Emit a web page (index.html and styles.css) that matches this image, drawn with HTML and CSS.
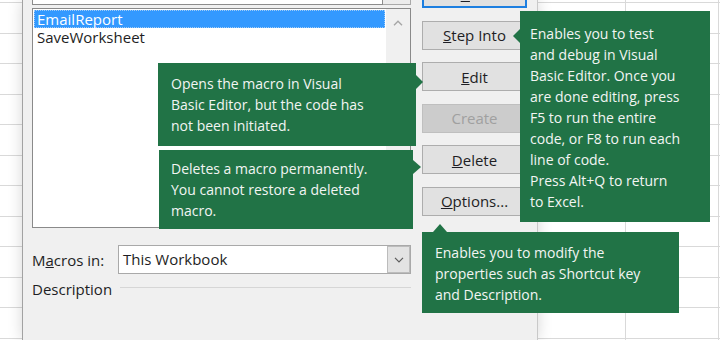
FILE: index.html
```html
<!DOCTYPE html>
<html lang="en">
<head>
<meta charset="utf-8">
<title>Macro dialog</title>
<link rel="stylesheet" href="styles.css">
</head>
<body>
<div class="screen">
  <div class="sheet sheet-left"></div>
  <div class="dialog">
    <div class="main">
      <div class="name-row">
        <div class="name-input"></div>
        <div class="name-btn"></div>
      </div>
      <div class="listbox">
        <ul class="items">
          <li class="item selected">EmailReport</li>
          <li class="item">SaveWorksheet</li>
        </ul>
        <div class="scrollbar">
          <div class="arrow-box">
            <svg width="10" height="6" viewBox="0 0 10 6"><path d="M1 5.2 L5 1.2 L9 5.2" fill="none" stroke="#a6a6a6" stroke-width="1.4"/></svg>
          </div>
        </div>
      </div>
      <div class="macros-row">
        <span class="label label-macros">M<u>a</u>cros in:</span>
        <div class="combo">
          <span class="combo-value">This Workbook</span>
          <span class="combo-btn">
            <svg width="10" height="6" viewBox="0 0 10 6"><path d="M1 0.8 L5 4.8 L9 0.8" fill="none" stroke="#5c5c5c" stroke-width="1.2"/></svg>
          </span>
        </div>
      </div>
      <div class="desc-row">
        <span class="label">Description</span>
        <span class="rule"></span>
      </div>
    </div>
    <div class="buttons">
      <button class="btn default"><u>R</u>un</button>
      <button class="btn"><u>S</u>tep Into</button>
      <button class="btn"><u>E</u>dit</button>
      <button class="btn disabled">Create</button>
      <button class="btn"><u>D</u>elete</button>
      <button class="btn"><u>O</u>ptions...</button>
    </div>
  </div>
  <div class="sheet sheet-right"></div>

  <div class="callout callout-step">Enables you to test<br>and debug in Visual<br>Basic Editor. Once you<br>are done editing, press<br>F5 to run the entire<br>code, or F8 to run each<br>line of code.<br>Press Alt+Q to return<br>to Excel.</div>
  <div class="callout callout-edit">Opens the macro in Visual<br>Basic Editor, but the code has<br>not been initiated.</div>
  <div class="callout callout-delete">Deletes a macro permanently.<br>You cannot restore a deleted<br>macro.</div>
  <div class="callout callout-options">Enables you to modify the<br>properties such as Shortcut key<br>and Description.</div>
</div>
</body>
</html>
```

FILE: styles.css
```css
* { box-sizing: border-box; }

html, body {
  margin: 0;
  padding: 0;
}

body {
  width: 720px;
  height: 340px;
  overflow: hidden;
  background: #ffffff;
  font-family: "Open Sans", "Noto Sans", "DejaVu Sans", sans-serif;
}

.screen {
  position: relative;
  display: flex;
  width: 720px;
  height: 340px;
  overflow: hidden;
}

/* spreadsheet grid */
.sheet {
  background-color: #ffffff;
  background-image: repeating-linear-gradient(to bottom, #d9d9d9 0, #d9d9d9 1px, transparent 1px, transparent 30.5px);
  background-position: 0 2px;
}

.sheet-left {
  width: 22px;
  flex-shrink: 0;
}

.sheet-right {
  flex: 1;
  background-image:
    linear-gradient(to right, transparent 87px, #d9d9d9 87px, #d9d9d9 88px, transparent 88px, transparent 180px, #d9d9d9 180px, #d9d9d9 181px, transparent 181px),
    repeating-linear-gradient(to bottom, #d9d9d9 0, #d9d9d9 1px, transparent 1px, transparent 30.5px);
  background-position: 0 0, 0 2px;
}

/* dialog */
.dialog {
  position: relative;
  z-index: 1;
  width: 516px;
  flex-shrink: 0;
  display: flex;
  gap: 11px;
  padding-left: 9px;
  padding-right: 10px;
  background: #f0f0f0;
  border-left: 1px solid #a2a2a2;
  border-right: 1px solid #c9c9c9;
  box-shadow: 0 0 14px rgba(0, 0, 0, 0.16);
  color: #1e1e24;
  font-size: 15px;
}

.main {
  width: 379px;
  flex-shrink: 0;
  margin-top: -20px;
  display: flex;
  flex-direction: column;
}

.name-row {
  display: flex;
  height: 25px;
}

.name-input {
  flex: 1;
  background: #ffffff;
  border: 1px solid #8c8c8c;
}

.name-btn {
  width: 28px;
  background: #ececec;
  border: 1px solid #a9a9a9;
  border-left: none;
}

.listbox {
  margin-top: 3px;
  height: 220px;
  display: flex;
  background: #ffffff;
  border: 1px solid #8a8a8a;
}

.items {
  flex: 1;
  margin: 0;
  padding: 1px;
  list-style: none;
}

.item {
  height: 18px;
  line-height: 16px;
  padding-left: 2px;
  border: 1px solid transparent;
  white-space: nowrap;
}

.item.selected {
  background: #3399ff;
  color: #ffffff;
  border: 1px dotted #9fcbf7;
}

.scrollbar {
  width: 24px;
  background: #f0f0f0;
}

.arrow-box {
  height: 28px;
  display: flex;
  align-items: center;
  justify-content: center;
}

.macros-row {
  margin-top: 17px;
  display: flex;
  align-items: center;
  height: 29px;
}

.label {
  white-space: nowrap;
}

.label-macros {
  width: 86px;
  flex-shrink: 0;
}

.combo {
  flex: 1;
  height: 29px;
  display: flex;
  background: #ffffff;
  border: 1px solid #a9a9a9;
}

.combo-value {
  flex: 1;
  padding-left: 4px;
  line-height: 27px;
}

.combo-btn {
  width: 23px;
  display: flex;
  align-items: center;
  justify-content: center;
  background: #e3e3e3;
  border: 1px solid #bcbcbc;
}

.desc-row {
  margin-top: 5px;
  height: 20px;
  display: flex;
  align-items: center;
  gap: 8px;
}

.rule {
  flex: 1;
  height: 1px;
  margin-top: -3px;
  background: #d6d6d6;
}

/* buttons */
.buttons {
  width: 105px;
  flex-shrink: 0;
  margin-top: -21px;
  display: flex;
  flex-direction: column;
  gap: 12.5px;
}

.btn {
  height: 29px;
  padding: 0;
  margin: 0;
  background: #e1e1e1;
  border: 1px solid #adadad;
  font-family: inherit;
  font-size: 15px;
  color: #1e1e24;
}

.btn.default {
  border: 2px solid #1d7fe0;
}

.btn.disabled {
  background: #cccccc;
  border-color: #bfbfbf;
  color: #a0a0a0;
}

/* callouts */
.callout {
  position: absolute;
  z-index: 5;
  background: #217346;
  color: #f2f5f3;
  font-size: 14px;
  line-height: 21px;
  white-space: nowrap;
}

.callout::before {
  content: "";
  position: absolute;
  width: 0;
  height: 0;
}

.callout-step {
  left: 520px;
  top: 11px;
  width: 190px;
  height: 211px;
  padding: 11.5px 0 0 10px;
}

.callout-step::before {
  left: -7px;
  top: 18px;
  border-top: 7px solid transparent;
  border-bottom: 7px solid transparent;
  border-right: 7px solid #217346;
}

.callout-edit {
  left: 158px;
  top: 63px;
  width: 258px;
  height: 83px;
  padding: 9.5px 0 0 13px;
}

.callout-edit::before {
  right: -7px;
  top: 12px;
  border-top: 7px solid transparent;
  border-bottom: 7px solid transparent;
  border-left: 7px solid #217346;
}

.callout-delete {
  left: 159px;
  top: 150px;
  width: 254px;
  height: 79px;
  padding: 7.5px 0 0 12px;
}

.callout-delete::before {
  right: -8px;
  top: 10px;
  border-top: 7px solid transparent;
  border-bottom: 7px solid transparent;
  border-left: 8px solid #217346;
}

.callout-options {
  left: 422px;
  top: 232px;
  width: 257px;
  height: 81px;
  padding: 9.5px 0 0 13px;
}

.callout-options::before {
  left: 11px;
  top: -8px;
  border-left: 7px solid transparent;
  border-right: 7px solid transparent;
  border-bottom: 8px solid #217346;
}
```
